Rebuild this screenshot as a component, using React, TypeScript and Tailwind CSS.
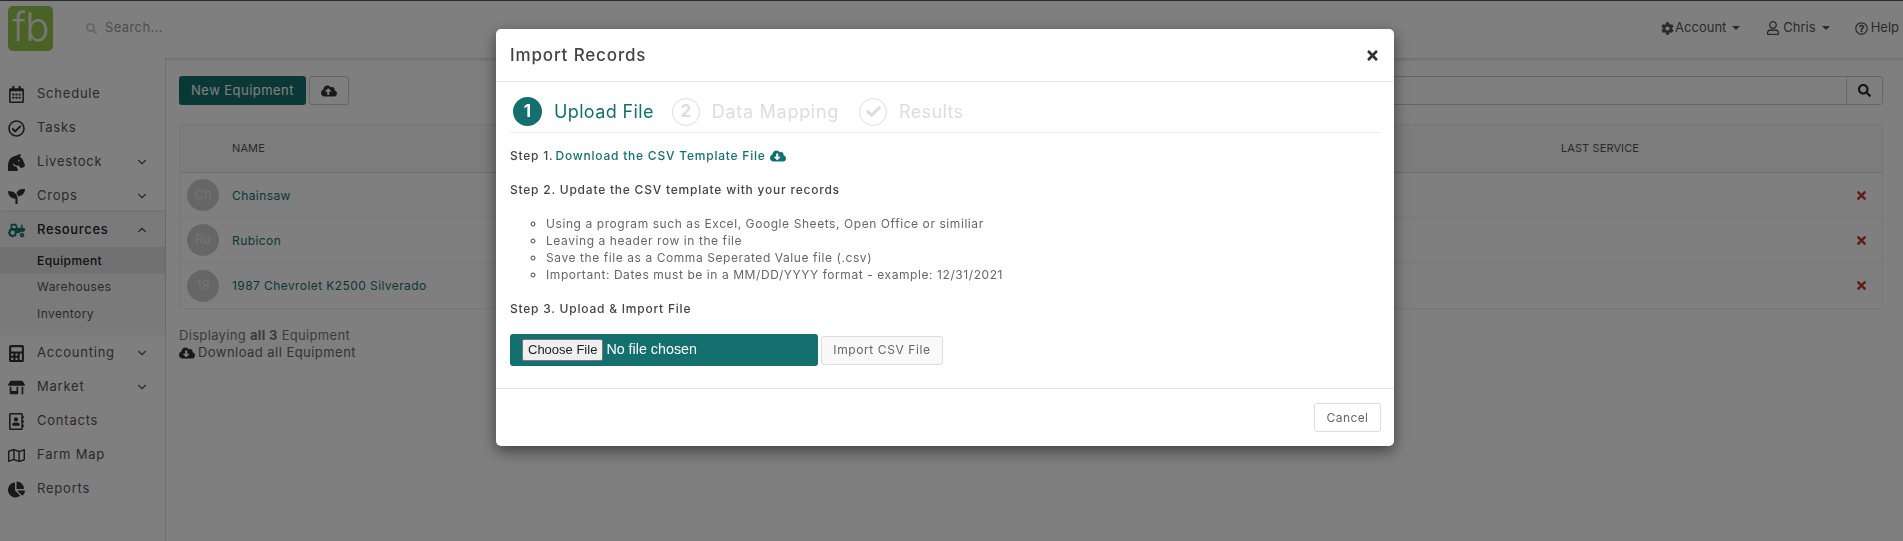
import type { ReactNode } from "react";
import { ChevronDown, ChevronUp } from "lucide-react";
import {
  FaCalculator,
  FaCheck,
  FaChartPie,
  FaHorseHead,
  FaCloudDownloadAlt,
  FaCloudUploadAlt,
  FaCog,
  FaRegAddressBook,
  FaRegCalendarAlt,
  FaRegCheckCircle,
  FaRegMap,
  FaRegQuestionCircle,
  FaRegUser,
  FaSearch,
  FaSeedling,
  FaStoreAlt,
  FaTimes,
  FaTractor,
} from "react-icons/fa";

const font = { fontFamily: "Inter, 'Noto Sans', sans-serif" };

function NavItem({
  icon,
  label,
  chevron,
}: {
  icon: ReactNode;
  label: string;
  chevron?: boolean;
}) {
  return (
    <div className="flex h-[34px] items-center pl-[8px] pr-[16px] pt-[2px] text-[13px] tracking-[0.06em] text-[#555]">
      <span className="flex w-[29px] shrink-0 text-[17px] text-[#333]">{icon}</span>
      <span className="flex-1">{label}</span>
      {chevron && <ChevronDown size={14} className="text-[#555]" />}
    </div>
  );
}

function Row({ badge, name }: { badge: string; name: string }) {
  return (
    <div className="flex h-[45px] items-center border-b border-[#eee] pl-[7px] pr-[14px] last:border-b-0">
      <span className="flex h-[32px] w-[32px] items-center justify-center rounded-full bg-[#ccc] text-[13px] text-[#e8e8e8]">
        {badge}
      </span>
      <span className="ml-[13px] flex-1 pt-[1px] text-[12px] tracking-[0.035em] text-[#14706f]">{name}</span>
      <FaTimes className="text-[13px] text-[#c0392b]" />
    </div>
  );
}

export default function App() {
  return (
    <div className="relative h-screen overflow-hidden bg-white" style={font}>
      {/* Top bar */}
      <header className="flex h-[58px] items-center border-t border-[#555] bg-white pb-[3px] pl-[8px] pr-[4px] shadow-[0_1px_4px_rgba(0,0,0,0.2)]">
        <div className="flex h-[45px] w-[45px] items-center justify-center rounded-[5px] bg-[#97c44e] text-[40px] font-light leading-none text-[#eee]">
          <span className="-mt-[2px] tracking-[-0.02em]">fb</span>
        </div>
        <FaSearch className="ml-[33px] text-[11px] text-[#ccc]" />
        <span className="ml-[8px] flex-1 text-[13px] tracking-[0.03em] text-[#999]">Search...</span>
        <div className="flex items-center text-[13px] text-[#555]">
          <FaCog className="text-[13px]" />
          <span className="ml-[1px]">Account</span>
          <span className="ml-[6px] border-x-[4px] border-t-[4px] border-x-transparent border-t-[#555]" />
          <FaRegUser className="ml-[26px] text-[14px]" />
          <span className="ml-[3px]">Chris</span>
          <span className="ml-[6px] border-x-[4px] border-t-[4px] border-x-transparent border-t-[#555]" />
          <FaRegQuestionCircle className="ml-[25px] text-[13px]" />
          <span className="ml-[3px]">Help</span>
        </div>
      </header>

      <div className="flex h-[483px]">
        {/* Sidebar */}
        <aside className="w-[166px] shrink-0 border-r border-[#ddd] bg-white pt-[18px]">
          <NavItem icon={<FaRegCalendarAlt />} label="Schedule" />
          <NavItem icon={<FaRegCheckCircle />} label="Tasks" />
          <NavItem icon={<FaHorseHead />} label="Livestock" chevron />
          <NavItem icon={<FaSeedling />} label="Crops" chevron />
          <div className="bg-[#f5f5f5] pb-[8px] shadow-[0_-1px_2px_rgba(0,0,0,0.15)]">
            <div className="flex h-[35px] items-center pl-[8px] pr-[16px] pt-[1px] text-[13px] font-medium tracking-[0.05em] text-[#222]">
              <span className="flex w-[29px] shrink-0 text-[17px] text-[#14706f]">
                <FaTractor />
              </span>
              <span className="flex-1">Resources</span>
              <ChevronUp size={14} className="text-[#555]" />
            </div>
            <div className="flex h-[27px] items-center bg-[#e2e2e2] pl-[37px] text-[12px] font-medium tracking-[0.035em] text-[#222]">
              Equipment
            </div>
            <div className="flex h-[26px] items-center pl-[37px] text-[12px] tracking-[0.035em] text-[#555]">
              Warehouses
            </div>
            <div className="flex h-[27px] items-center pl-[37px] text-[12px] tracking-[0.035em] text-[#555]">
              Inventory
            </div>
          </div>
          <NavItem icon={<FaCalculator />} label="Accounting" chevron />
          <NavItem icon={<FaStoreAlt />} label="Market" chevron />
          <NavItem icon={<FaRegAddressBook />} label="Contacts" />
          <NavItem icon={<FaRegMap />} label="Farm Map" />
          <NavItem icon={<FaChartPie />} label="Reports" />
        </aside>

        {/* Main content */}
        <main className="flex-1 pl-[13px] pr-[20px] pt-[18px]">
          <div className="flex h-[29px] gap-[3px]">
            <button className="w-[127px] rounded-[3px] bg-[#14706f] text-[13px] tracking-[0.035em] text-white">
              New Equipment
            </button>
            <button className="flex w-[40px] items-center justify-center rounded-[3px] border border-[#ccc] text-[16px] text-[#333]">
              <FaCloudUploadAlt />
            </button>
            <div className="ml-auto flex w-[800px] rounded-[3px] border border-[#ccc]">
              <div className="flex-1" />
              <div className="flex w-[36px] items-center justify-center border-l border-[#ccc] text-[13px] text-[#222]">
                <FaSearch />
              </div>
            </div>
          </div>

          <div className="mt-[19px] rounded-[3px] border border-[#eee]">
            <div className="flex h-[48px] items-center border-b border-[#ddd] bg-[#f9f9f9] pl-[52px] text-[11px] tracking-[0.01em] text-[#555]">
              <span>NAME</span>
              <span className="ml-[1296px]">LAST SERVICE</span>
            </div>
            <Row badge="Ch" name="Chainsaw" />
            <Row badge="Ru" name="Rubicon" />
            <Row badge="19" name="1987 Chevrolet K2500 Silverado" />
          </div>

          <p className="mt-[18px] text-[13px] leading-[17px] tracking-[0.025em] text-[#777]">
            Displaying <b className="font-bold">all 3</b> Equipment
          </p>
          <p className="flex items-center gap-[3px] text-[13px] leading-[17px] tracking-[0.035em] text-[#666]">
            <FaCloudDownloadAlt className="text-[16px] text-[#333]" />
            Download all Equipment
          </p>
        </main>
      </div>

      {/* Backdrop */}
      <div className="fixed inset-0 bg-black/50" />

      {/* Import dialog */}
      <div className="fixed left-[496px] top-[29px] w-[898px] rounded-[5px] bg-white shadow-[0_5px_15px_rgba(0,0,0,0.5)]">
        <div className="flex h-[53px] items-center justify-between border-b border-[#e5e5e5] px-[14px] pr-[14px]">
          <h2 className="pt-[2px] text-[17px] font-medium tracking-[0.05em] text-[#444]">Import Records</h2>
          <FaTimes className="text-[15px] text-[#333]" />
        </div>

        <div className="px-[14px] pr-[13px]">
          <div className="flex h-[51px] items-center border-b border-[#eee] pl-[3px] pt-[9px]">
            <span className="flex h-[29px] w-[29px] items-center justify-center rounded-full bg-[#14706f] text-[17px] font-bold text-white">
              1
            </span>
            <span className="ml-[12px] text-[18px] tracking-[0.02em] text-[#14706f]">Upload File</span>
            <span className="ml-[18px] flex h-[28px] w-[28px] items-center justify-center rounded-full border border-[#ddd] text-[17px] font-bold text-[#ddd]">
              2
            </span>
            <span className="ml-[12px] text-[18px] tracking-[0.04em] text-[#ddd]">Data Mapping</span>
            <span className="ml-[20px] flex h-[28px] w-[28px] items-center justify-center rounded-full border border-[#ddd] text-[15px] text-[#ddd]">
              <FaCheck />
            </span>
            <span className="ml-[12px] text-[18px] tracking-[0.02em] text-[#ddd]">Results</span>
          </div>

          <p className="mt-[14px] flex h-[17px] items-center text-[12px] font-medium tracking-[0.065em] text-[#444]">
            Step 1.
            <span className="ml-[2px] text-[#14706f]">Download the CSV Template File</span>
            <FaCloudDownloadAlt className="ml-[4px] text-[16px] text-[#14706f]" />
          </p>
          <p className="mt-[17px] h-[17px] text-[12px] font-medium leading-[17px] tracking-[0.065em] text-[#444]">
            Step 2. Update the CSV template with your records
          </p>

          <ul className="mt-[17px] list-[circle] pl-[36px] text-[12px] leading-[17px] tracking-[0.048em] text-[#666] marker:text-[#444]">
            <li>Using a program such as Excel, Google Sheets, Open Office or similiar</li>
            <li>Leaving a header row in the file</li>
            <li>Save the file as a Comma Seperated Value file (.csv)</li>
            <li>Important: Dates must be in a MM/DD/YYYY format - example: 12/31/2021</li>
          </ul>

          <p className="mt-[17px] h-[17px] text-[12px] font-medium leading-[17px] tracking-[0.065em] text-[#444]">
            Step 3. Upload &amp; Import File
          </p>

          <div className="mt-[17px] flex items-center gap-[3px]">
            <input
              type="file"
              className="h-[32px] w-[308px] rounded-[3px] bg-[#14706f] px-[12px] py-[5px] text-[14.3px] leading-[20px] text-white [font-family:'Liberation_Sans',sans-serif] file:mr-[3px] file:rounded-[2px] file:border file:border-[#767676] file:bg-[#efefef] file:px-[5px] file:text-[13px] file:text-[#222]"
            />
            <button className="h-[29px] w-[122px] rounded-[3px] border border-[#ddd] bg-[#f9f9f9] text-[12px] tracking-[0.05em] text-[#666]">
              Import CSV File
            </button>
          </div>
        </div>

        <div className="mt-[22px] flex h-[58px] items-center justify-end border-t border-[#e5e5e5] pr-[13px]">
          <button className="h-[29px] w-[67px] rounded-[3px] border border-[#ddd] text-[12px] tracking-[0.035em] text-[#666]">
            Cancel
          </button>
        </div>
      </div>
    </div>
  );
}
